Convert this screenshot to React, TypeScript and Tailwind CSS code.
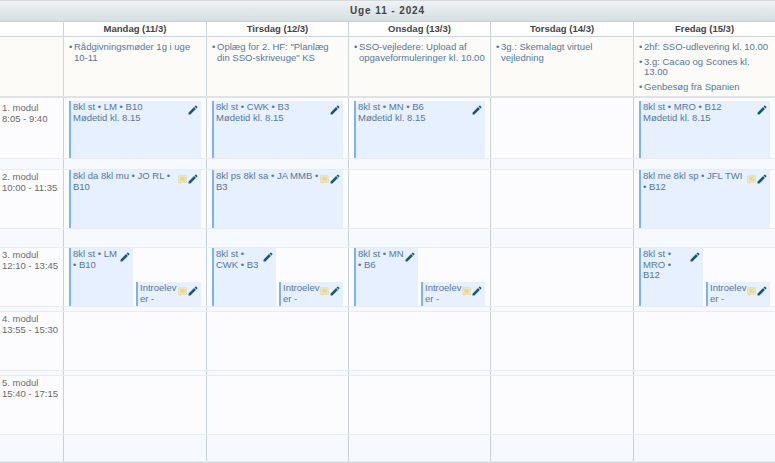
import type { ReactNode } from 'react';

const GRID = 'grid grid-cols-[64px_143px_142px_142px_143px_141px]';

const days = ['Mandag (11/3)', 'Tirsdag (12/3)', 'Onsdag (13/3)', 'Torsdag (14/3)', 'Fredag (15/3)'];

const notes: string[][] = [
  ['Rådgivningsmøder 1g i uge 10-11'],
  ['Oplæg for 2. HF: "Planlæg din SSO-skriveuge" KS'],
  ['SSO-vejledere: Upload af opgaveformuleringer kl. 10.00'],
  ['3g.: Skemalagt virtuel vejledning'],
  ['2hf: SSO-udlevering kl. 10.00', '3.g: Cacao og Scones kl. 13.00', 'Genbesøg fra Spanien'],
];

function PencilIcon() {
  return (
    <svg viewBox="0 0 24 24" className="w-[12px] h-[12px] shrink-0 fill-[#15577f]">
      <path d="M3 17.25V21h3.75L17.81 9.94l-3.75-3.75L3 17.25zM20.71 7.04c.39-.39.39-1.02 0-1.41l-2.34-2.34c-.39-.39-1.02-.39-1.41 0l-1.83 1.83 3.75 3.75 1.83-1.83z" />
    </svg>
  );
}

function NoteIcon() {
  return (
    <svg viewBox="0 0 10 10" className="w-[9px] h-[9px] shrink-0 mt-[2px]">
      <path d="M1.2 .8h7.6a1 1 0 0 1 1 1v5.4a1 1 0 0 1-1 1H3.5L2 9.6V8.2h-.8a1 1 0 0 1-1-1V1.8a1 1 0 0 1 1-1z" fill="#f3e6b3" stroke="#dccd94" strokeWidth="0.5" />
      <path d="M2.5 3.4h5M2.5 5.4h5" stroke="#c6b67a" strokeWidth="0.6" />
    </svg>
  );
}

function Lesson({ text, note, className }: { text: ReactNode; note?: boolean; className: string }) {
  return (
    <div className={`flex border-l-2 border-[#79b3f3] bg-[#e7f0fe] pl-[2px] pt-px ${className}`}>
      <div className="flex-1 min-w-0 break-words">{text}</div>
      <div className="flex items-start pt-[2px] pr-[2px]">
        {note && <NoteIcon />}
        <PencilIcon />
      </div>
    </div>
  );
}

function Single({ text, note }: { text: ReactNode; note?: boolean }) {
  return <Lesson text={text} note={note} className="h-full" />;
}

function Split({ text }: { text: ReactNode }) {
  return (
    <div className="flex h-full gap-[3px]">
      <Lesson text={text} className="w-[64px] shrink-0 h-full" />
      <div className="flex-1 min-w-0 flex items-end">
        <Lesson text={<>Introelev<br />er -</>} note className="w-full h-[24px]" />
      </div>
    </div>
  );
}

const rows: { label: string; time: string; height: string; gap: string; top: string; cells: ReactNode[] }[] = [
  {
    label: '1. modul',
    time: '8:05 - 9:40',
    height: 'h-[60px]',
    gap: 'h-[12px]',
    top: 'pt-[3px]',
    cells: [
      <Single text={<>8kl st • LM • B10<br />Mødetid kl. 8.15</>} />,
      <Single text={<>8kl st • CWK • B3<br />Mødetid kl. 8.15</>} />,
      <Single text={<>8kl st • MN • B6<br />Mødetid kl. 8.15</>} />,
      null,
      <Single text={<>8kl st • MRO • B12<br />Mødetid kl. 8.15</>} />,
    ],
  },
  {
    label: '2. modul',
    time: '10:00 - 11:35',
    height: 'h-[58px]',
    gap: 'h-[20px]',
    top: '',
    cells: [
      <Single note text="8kl da 8kl mu • JO RL • B10" />,
      <Single note text="8kl ps 8kl sa • JA MMB • B3" />,
      null,
      null,
      <Single note text="8kl me 8kl sp • JFL TWI • B12" />,
    ],
  },
  {
    label: '3. modul',
    time: '12:10 - 13:45',
    height: 'h-[58px]',
    gap: 'h-[6px]',
    top: '',
    cells: [
      <Split text="8kl st • LM • B10" />,
      <Split text="8kl st • CWK • B3" />,
      <Split text={<>8kl st • MN<br />• B6</>} />,
      null,
      <Split text={<>8kl st •<br />MRO •<br />B12</>} />,
    ],
  },
  { label: '4. modul', time: '13:55 - 15:30', height: 'h-[58px]', gap: 'h-[6px]', top: '', cells: [null, null, null, null, null] },
  { label: '5. modul', time: '15:40 - 17:15', height: 'h-[58px]', gap: 'h-[28px]', top: '', cells: [null, null, null, null, null] },
];

export default function App() {
  return (
    <div className="w-[775px] h-[463px] overflow-hidden bg-white font-['Liberation_Sans',Arial,sans-serif] text-[9.5px] leading-[10.7px] text-[#55779e]">
      <div className="h-px bg-[#d5dadd]" />
      <div className="h-[21px] flex items-center justify-center border-b border-[#c6cfd6] bg-gradient-to-b from-[#eef2f3] to-[#d5dfe2] text-[10px] font-bold tracking-[0.9px] text-[#444]">
        Uge 11 - 2024
      </div>

      <div className={`${GRID} h-[15px] border-b border-[#ccd4dc] bg-white`}>
        <div className="border-r border-[#ccd4dc]" />
        {days.map((d) => (
          <div key={d} className="border-r border-[#ccd4dc] text-center font-bold text-[9.5px] leading-[14px] text-[#444] last:border-r-0">
            {d}
          </div>
        ))}
      </div>

      <div className={`${GRID} h-[61px] border-b-2 border-[#dfe3e8] bg-[#fcfbf7]`}>
        <div className="border-r border-[#ccd4dc]" />
        {notes.map((items, i) => (
          <div key={i} className="border-r border-[#ccd4dc] pl-[5px] pr-[5px] pt-[5px] flex flex-col gap-[4px] last:border-r-0">
            {items.map((n) => (
              <div key={n} className="flex">
                <span className="w-[5px] shrink-0">•</span>
                <span>{n}</span>
              </div>
            ))}
          </div>
        ))}
      </div>

      {rows.map((r) => (
        <div key={r.label}>
          <div className={`${GRID} ${r.height} bg-[#fcfcff]`}>
            <div className={`border-r border-[#c8d0d8] pl-[2px] text-[#6a6a6a] ${r.top || 'pt-[2px]'}`}>
              <div className={r.top ? 'pt-[2px]' : ''}>
                {r.label}
                <br />
                {r.time}
              </div>
            </div>
            {r.cells.map((c, i) => (
              <div key={i} className={`border-r border-[#c8d0d8] pl-[5px] pr-[5px] last:border-r-0 ${r.top}`}>
                {c}
              </div>
            ))}
          </div>
          <div className={`${GRID} ${r.gap} border-y border-[#e8ecf2] bg-[#f6f9fe]`}>
            <div className="border-r border-[#c8d0d8]" />
            {r.cells.map((_, i) => (
              <div key={i} className="border-r border-[#c8d0d8] last:border-r-0" />
            ))}
          </div>
        </div>
      ))}
      <div className="h-px bg-[#d5dadd]" />
    </div>
  );
}
